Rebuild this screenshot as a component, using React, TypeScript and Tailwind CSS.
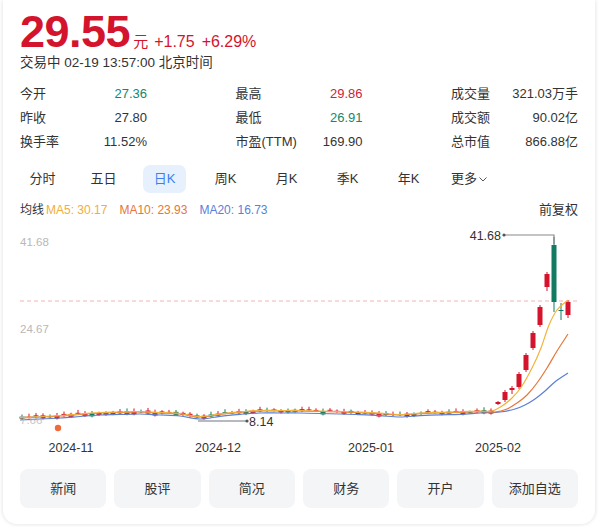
import React from 'react';

const STATS = [
  [
    { label: '今开', value: '27.36', color: 'text-[#16866c]' },
    { label: '昨收', value: '27.80', color: 'text-[#333]' },
    { label: '换手率', value: '11.52%', color: 'text-[#333]' },
  ],
  [
    { label: '最高', value: '29.86', color: 'text-[#d0213a]' },
    { label: '最低', value: '26.91', color: 'text-[#16866c]' },
    { label: '市盈(TTM)', value: '169.90', color: 'text-[#333]' },
  ],
  [
    { label: '成交量', value: '321.03万手', color: 'text-[#333]' },
    { label: '成交额', value: '90.02亿', color: 'text-[#333]' },
    { label: '总市值', value: '866.88亿', color: 'text-[#333]' },
  ],
];

const TABS = ['分时', '五日', '日K', '周K', '月K', '季K', '年K'];
const ACTIONS = ['新闻', '股评', '简况', '财务', '开户', '添加自选'];

const RED = '#d4142c';
const GREEN = '#127a62';

// baseline of the flat part, page coords
const BASE: [number, number][] = [
  [20, 419], [60, 417], [100, 414], [140, 413], [180, 415], [200, 418],
  [230, 414], [260, 412], [300, 412], [340, 413], [370, 414], [400, 416],
  [430, 414], [470, 413], [495, 412],
];

const baseAt = (x: number) => {
  for (let i = 0; i < BASE.length - 1; i++) {
    const [x0, y0] = BASE[i];
    const [x1, y1] = BASE[i + 1];
    if (x >= x0 && x <= x1) return y0 + ((x - x0) / (x1 - x0)) * (y1 - y0);
  }
  return BASE[BASE.length - 1][1];
};

const rnd = (i: number) => {
  const s = Math.sin(i * 12.9898 + 78.233) * 43758.5453;
  return s - Math.floor(s);
};

type Candle = { x: number; top: number; bot: number; hi: number; lo: number; up: boolean };

const flatCandles: Candle[] = [];
for (let i = 0, x = 22; x < 492; i++, x += 7) {
  const b = baseAt(x);
  const up = rnd(i) > 0.4;
  const h = 1 + Math.round(rnd(i + 100) * 2);
  const top = b - 1 - rnd(i + 200) * 2;
  flatCandles.push({ x, top, bot: top + h, hi: top - 1 - rnd(i + 300) * 2, lo: top + h + 1, up });
}

const riseCandles: Candle[] = [
  { x: 498, top: 402, bot: 404, hi: 401, lo: 405, up: true },
  { x: 505, top: 392, bot: 400, hi: 390, lo: 402, up: true },
  { x: 512, top: 388, bot: 390, hi: 386, lo: 394, up: true },
  { x: 519, top: 374, bot: 387, hi: 372, lo: 389, up: true },
  { x: 526, top: 355, bot: 370, hi: 353, lo: 372, up: true },
  { x: 533, top: 333, bot: 348, hi: 331, lo: 350, up: true },
  { x: 540, top: 307, bot: 325, hi: 305, lo: 327, up: true },
  { x: 547, top: 274, bot: 287, hi: 272, lo: 291, up: true },
  { x: 554, top: 245, bot: 302, hi: 237, lo: 312, up: false },
  { x: 561, top: 310, bot: 311, hi: 303, lo: 320, up: false },
  { x: 568, top: 302, bot: 315, hi: 300, lo: 318, up: true },
];

const smooth = (pts: [number, number][]) => {
  let d = `M${pts[0][0]},${pts[0][1]}`;
  for (let i = 0; i < pts.length - 1; i++) {
    const p0 = pts[i - 1] || pts[i];
    const p1 = pts[i];
    const p2 = pts[i + 1];
    const p3 = pts[i + 2] || p2;
    const c1x = p1[0] + (p2[0] - p0[0]) / 6;
    const c1y = p1[1] + (p2[1] - p0[1]) / 6;
    const c2x = p2[0] - (p3[0] - p1[0]) / 6;
    const c2y = p2[1] - (p3[1] - p1[1]) / 6;
    d += ` C${c1x.toFixed(1)},${c1y.toFixed(1)} ${c2x.toFixed(1)},${c2y.toFixed(1)} ${p2[0]},${p2[1]}`;
  }
  return d;
};

const flatLine = (dy: number, upTo: number) => {
  const pts: [number, number][] = [];
  for (let x = 20; x <= upTo; x += 20) pts.push([x, +(baseAt(x) + dy).toFixed(1)]);
  return pts;
};

const MA5 = smooth([...flatLine(-1.5, 480), [492, 411], [502, 406], [512, 398], [522, 386], [532, 368], [541, 348], [549, 325], [557, 310], [568, 300]]);
const MA10 = smooth([...flatLine(-1, 480), [495, 412], [507, 409], [517, 403], [527, 395], [537, 383], [547, 368], [557, 351], [568, 334]]);
const MA20 = smooth([...flatLine(1, 460), [480, 413], [500, 412], [515, 409], [525, 405], [535, 399], [545, 391], [556, 381], [568, 373]]);

const CandleMark = ({ c }: { c: Candle }) => {
  const col = c.up ? RED : GREEN;
  return (
    <g>
      <line x1={c.x} x2={c.x} y1={c.hi} y2={c.lo} stroke={col} strokeWidth={1} />
      <rect x={c.x - 2.5} y={c.top} width={5} height={Math.max(1, c.bot - c.top)} fill={col} />
    </g>
  );
};

const KChart = () => (
  <svg width={592} height={236} className="block">
    <g transform="translate(-3,-220)">
      <text x={20} y={246} fontSize={11.5} fill="#b8b8b8">41.68</text>
      <text x={20} y={333} fontSize={11.5} fill="#b8b8b8">24.67</text>
      <line x1={20} x2={578} y1={301} y2={301} stroke="#f2b4b4" strokeDasharray="4 3" />

      {flatCandles.map((c, i) => <CandleMark key={i} c={c} />)}
      {riseCandles.map((c, i) => <CandleMark key={'r' + i} c={c} />)}

      <path d={MA20} fill="none" stroke="#5b7fd6" strokeWidth={1.2} />
      <path d={MA10} fill="none" stroke="#e6763a" strokeWidth={1.2} />
      <path d={MA5} fill="none" stroke="#f2b33c" strokeWidth={1.2} />

      <text x={20} y={424} fontSize={11.5} fill="#b8b8b8" opacity={0.8}>7.66</text>
      <circle cx={58} cy={428} r={3.2} fill="#f26a3c" />

      <polyline points="504,235 554,235 554,244" fill="none" stroke="#8a8a8a" strokeWidth={1.2} />
      <circle cx={504} cy={235} r={1.6} fill="#555" />
      <text x={501} y={239.5} fontSize={12.5} fill="#333" textAnchor="end">41.68</text>

      <line x1={198} x2={246} y1={421} y2={421} stroke="#6f7782" strokeWidth={1.2} />
      <circle cx={247} cy={421} r={1.6} fill="#555" />
      <text x={249} y={425.5} fontSize={12.5} fill="#333">8.14</text>

      <text x={71} y={452} fontSize={12.5} fill="#333" textAnchor="middle">2024-11</text>
      <text x={218} y={452} fontSize={12.5} fill="#333" textAnchor="middle">2024-12</text>
      <text x={371} y={452} fontSize={12.5} fill="#333" textAnchor="middle">2025-01</text>
      <text x={498} y={452} fontSize={12.5} fill="#333" textAnchor="middle">2025-02</text>
    </g>
  </svg>
);

export default function App() {
  return (
    <div className="w-[601px] h-[527px] bg-white pl-[3px] font-['Liberation_Sans','Noto_Sans_CJK_SC',sans-serif] text-[#333]">
      <div className="w-[592px] h-[524px] bg-white rounded-b-[14px] shadow-[0_0_4px_rgba(0,0,0,0.14)] px-[17px] pt-[9px]">
        {/* Price */}
        <div className="flex items-baseline h-[44px] leading-none">
          <span className="text-[45px] font-bold text-[#d4142c] tracking-[-0.5px]">29.55</span>
          <span className="ml-[3px] text-[15px] text-[#d4142c]">元</span>
          <span className="ml-[6px] text-[16px] text-[#d4142c]">+1.75</span>
          <span className="ml-[7px] text-[16px] text-[#d4142c]">+6.29%</span>
        </div>
        <div className="h-[18px] text-[13.5px] leading-[18px] mt-[1px]">交易中 02-19 13:57:00 北京时间</div>

        {/* Stats */}
        <div className="mt-[10px] flex text-[13px]">
          {STATS.map((col, ci) => (
            <div key={ci} className={ci === 2 ? 'w-[127px]' : 'w-[216px]'}>
              {col.map((s) => (
                <div key={s.label} className="flex justify-between w-[127px] h-[24px] items-center">
                  <span>{s.label}</span>
                  <span className={s.color}>{s.value}</span>
                </div>
              ))}
            </div>
          ))}
        </div>

        {/* Period tabs */}
        <div className="mt-[11px] -ml-[8px] grid grid-cols-[repeat(8,61px)] h-[28px] text-[13px]">
          {TABS.map((t) => (
            <div key={t} className="flex items-center justify-center">
              <span
                className={
                  t === '日K'
                    ? 'h-[28px] w-[43px] rounded-[7px] bg-[#e7f0fd] text-[#3b7ff0] flex items-center justify-center'
                    : ''
                }
              >
                {t}
              </span>
            </div>
          ))}
          <div className="flex items-center justify-center">
            更多
            <svg width="10" height="10" viewBox="0 0 10 10" className="ml-[1px]">
              <path d="M1.5 3.5 L5 7 L8.5 3.5" fill="none" stroke="#555" strokeWidth="1" />
            </svg>
          </div>
        </div>

        {/* MA legend */}
        <div className="mt-[7px] h-[20px] flex items-center text-[12px]">
          <span>均线</span>
          <span className="ml-[2px] text-[#f0ae3a]">MA5: 30.17</span>
          <span className="ml-[12px] text-[#e6763a]">MA10: 23.93</span>
          <span className="ml-[12px] text-[#5b7fd6]">MA20: 16.73</span>
          <span className="ml-auto text-[13px]">前复权</span>
        </div>

        {/* Chart */}
        <div className="-mx-[17px]">
          <KChart />
        </div>

        {/* Actions */}
        <div className="mt-[13px] grid grid-cols-6 gap-[8px]">
          {ACTIONS.map((a) => (
            <div key={a} className="h-[39px] rounded-[8px] bg-[#f4f5f7] flex items-center justify-center text-[13px]">
              {a}
            </div>
          ))}
        </div>
      </div>
    </div>
  );
}
